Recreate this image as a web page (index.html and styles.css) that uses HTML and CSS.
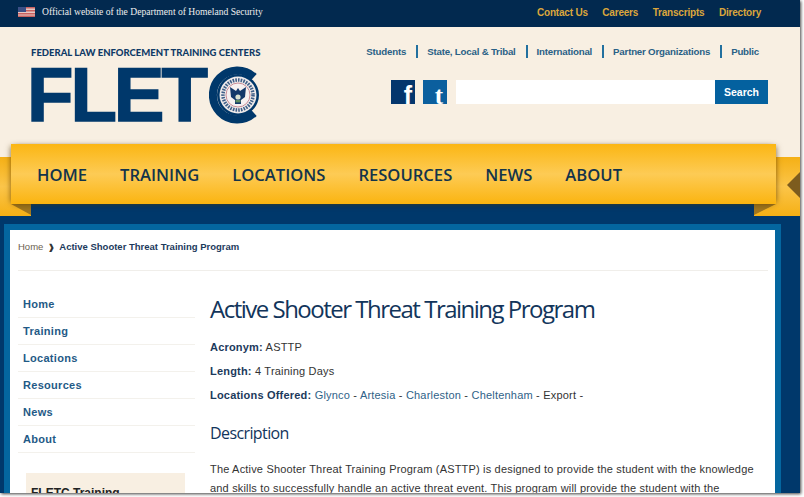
FILE: index.html
```html
<!DOCTYPE html>
<html lang="en">
<head>
  <meta charset="UTF-8">
  <title>Active Shooter Threat Training Program</title>
  <link rel="stylesheet" href="styles.css">
</head>
<body>
  <div class="page">
    <!-- top bar -->
    <div class="topbar">
      <div class="official">
        <svg class="flag" width="17" height="10" viewBox="0 0 17 10">
          <rect width="17" height="10" fill="#e6c8c4"/>
          <rect y="0" width="17" height="1.5" fill="#c9605f"/>
          <rect y="3" width="17" height="1.5" fill="#c9605f"/>
          <rect y="6" width="17" height="1.5" fill="#c9605f"/>
          <rect y="8.5" width="17" height="1.5" fill="#c9605f"/>
          <rect width="8" height="5" fill="#3c4f86"/>
        </svg>
        <span>Official website of the Department of Homeland Security</span>
      </div>
      <div class="toplinks">
        <a>Contact Us</a>
        <a>Careers</a>
        <a>Transcripts</a>
        <a>Directory</a>
      </div>
    </div>

    <!-- logo, audience links, search -->
    <div class="header">
      <div class="logo">
        <div class="logo-small">FEDERAL LAW ENFORCEMENT TRAINING CENTERS</div>
        <div class="logo-big">
          <span class="logo-letters">FLET</span>
          <svg class="logo-c" width="50" height="58" viewBox="0 0 50 58">
            <path d="M45 11 A24.5 24.5 0 1 0 45 47" fill="none" stroke="#00386b" stroke-width="8"/>
            <circle cx="29" cy="29" r="21" fill="#00386b"/>
            <circle cx="29" cy="29" r="18.5" fill="#eeeaea"/>
            <circle cx="29" cy="29" r="15" fill="none" stroke="#3f5f88" stroke-width="3.5" stroke-dasharray="1.6 1.1"/>
            <circle cx="29" cy="29" r="12" fill="#f6f1f1" stroke="#c98d97" stroke-width="1"/>
            <path d="M21 21 L27 25 L29 22 L31 25 L37 21 L36 31 L32 34 L32 38 L26 38 L26 34 L22 31 Z" fill="#12386a"/>
            <circle cx="29" cy="31" r="2.6" fill="#d8e0d0"/>
            <rect x="26.5" y="34" width="5" height="2.4" fill="#5d8b60"/>
          </svg>
        </div>
      </div>
      <div class="header-right">
        <div class="audience">
          <a>Students</a>
          <a>State, Local &amp; Tribal</a>
          <a>International</a>
          <a>Partner Organizations</a>
          <a>Public</a>
        </div>
        <div class="search-row">
          <span class="social social-fb">f</span>
          <span class="social social-tm">t</span>
          <div class="search">
            <div class="search-input"></div>
            <div class="search-btn">Search</div>
          </div>
        </div>
      </div>
    </div>

    <!-- ribbon nav -->
    <div class="banner">
      <span class="fold fold-left"></span>
      <span class="fold fold-right"></span>
      <span class="band-arrow"></span>
      <div class="ribbon">
        <a>HOME</a>
        <a>TRAINING</a>
        <a>LOCATIONS</a>
        <a>RESOURCES</a>
        <a>NEWS</a>
        <a>ABOUT</a>
      </div>
    </div>

    <!-- content -->
    <div class="frame">
      <div class="content">
        <div class="crumbs">
          <a class="crumb-home">Home</a>
          <span class="crumb-sep">&#10097;</span>
          <span class="crumb-current">Active Shooter Threat Training Program</span>
        </div>
        <div class="columns">
          <div class="sidebar">
            <ul class="sidenav">
              <li>Home</li>
              <li>Training</li>
              <li>Locations</li>
              <li>Resources</li>
              <li>News</li>
              <li>About</li>
            </ul>
            <div class="promo">FLETC Training</div>
          </div>
          <div class="article">
            <h1>Active Shooter Threat Training Program</h1>
            <p class="fact"><b>Acronym:</b> ASTTP</p>
            <p class="fact"><b>Length:</b> 4 Training Days</p>
            <p class="fact"><b>Locations Offered:</b> <a>Glynco</a> - <a>Artesia</a> - <a>Charleston</a> - <a>Cheltenham</a> - Export -</p>
            <h2>Description</h2>
            <p class="desc">The Active Shooter Threat Training Program (ASTTP) is designed to provide the student with the knowledge and skills to successfully handle an active threat event. This program will provide the student with the</p>
          </div>
        </div>
      </div>
    </div>
  </div>
</body>
</html>
```

FILE: styles.css
```css
html, body {
  margin: 0;
  height: 100%;
  overflow: hidden;
  background: #fff;
}
body {
  font-family: "Liberation Sans", Arial, sans-serif;
  color: #333;
}
.page {
  width: 800px;
  height: 493px;
  overflow: hidden;
  display: flex;
  flex-direction: column;
  background: #00386b;
  box-shadow: 1px 1px 3px rgba(0, 0, 0, 0.75);
}

/* top bar */
.topbar {
  flex: none;
  height: 27px;
  box-sizing: border-box;
  background: #02294f;
  display: flex;
  justify-content: space-between;
  padding: 0 43px 0 18px;
}
.official {
  display: flex;
  align-items: center;
  gap: 7px;
  height: 23px;
  color: #eee;
  font-family: "Liberation Serif", serif;
  font-size: 9.6px;
}
.toplinks {
  display: flex;
  gap: 14.5px;
  padding-top: 7px;
  font-size: 10px;
  font-weight: bold;
  letter-spacing: -0.2px;
  color: #dba63c;
  margin-right: -4px;
}

/* header */
.header {
  flex: none;
  height: 117px;
  background: #f8efe2;
  display: flex;
  justify-content: space-between;
  padding: 0 32px 0 31px;
}
.logo-small {
  margin-top: 20px;
  font-family: "Lato", sans-serif;
  font-size: 9.5px;
  font-weight: 900;
  color: #0f3a66;
  white-space: nowrap;
}
.logo-big {
  display: flex;
  align-items: center;
  margin-top: 8px;
  height: 58px;
}
.logo-letters {
  margin-left: -4px;
  font-family: "Liberation Sans", sans-serif;
  font-size: 76px;
  line-height: 58px;
  font-weight: bold;
  letter-spacing: -3px;
  color: #00386b;
  -webkit-text-stroke: 1.5px #00386b;
}
.logo-c {
  margin-left: 4px;
}
.header-right {
  display: flex;
  flex-direction: column;
  align-items: flex-end;
}
.audience {
  display: flex;
  margin-top: 18px;
  margin-right: 9px;
  font-size: 9.7px;
  font-weight: bold;
  letter-spacing: -0.2px;
  color: #2a6186;
}
.audience a {
  padding: 0 10px 0 9px;
  line-height: 13px;
  border-right: 2px solid #22709f;
}
.audience a:last-child {
  padding-right: 0;
  border-right: none;
}
.search-row {
  display: flex;
  margin-top: 22px;
}
.social {
  height: 24px;
  overflow: hidden;
  color: #fff;
  text-align: right;
  font-size: 25px;
  font-weight: bold;
  line-height: 31px;
}
.social-fb {
  background: #04366d;
  width: 21px;
  padding-right: 3px;
  margin-right: 8px;
}
.social-tm {
  background: #0b5f9e;
  width: 20px;
  padding-right: 4px;
  margin-right: 9px;
  font-family: "Liberation Serif", serif;
}
.search {
  display: flex;
}
.search-input {
  width: 259px;
  height: 24px;
  background: #fff;
}
.search-btn {
  width: 53px;
  height: 24px;
  background: #04619f;
  color: #fff;
  font-size: 10.5px;
  font-weight: bold;
  line-height: 24px;
  text-align: center;
}

/* ribbon */
.banner {
  flex: none;
  position: relative;
  height: 72px;
  box-sizing: border-box;
  padding: 0 24px 0 11px;
  background: linear-gradient(to bottom, #f8efe2 13px, #00386b 13px);
}
.banner::before,
.banner::after {
  content: "";
  position: absolute;
  top: 13px;
  bottom: 0;
  background: linear-gradient(to bottom, #f5b015, #fbc54a 50%, #f5b015);
}
.banner::before {
  left: 0;
  width: 31px;
}
.banner::after {
  right: 0;
  width: 46px;
}
.fold,
.band-arrow {
  position: absolute;
  z-index: 1;
}
.fold {
  top: 60px;
  width: 20px;
  height: 11px;
  background: #a0761f;
}
.fold-left {
  left: 11px;
  clip-path: polygon(0 0, 100% 0, 100% 100%);
}
.fold-right {
  left: 754px;
  width: 22px;
  clip-path: polygon(0 0, 100% 0, 0 100%);
}
.band-arrow {
  right: 0;
  top: 28px;
  width: 13px;
  height: 26px;
  background: #7d5c1e;
  clip-path: polygon(0 50%, 100% 0, 100% 100%);
}
.ribbon {
  position: relative;
  z-index: 2;
  height: 60px;
  box-sizing: border-box;
  display: flex;
  align-items: center;
  gap: 33px;
  padding: 0 26px;
  background: linear-gradient(to bottom, #fbb613 0, #fdcb55 50%, #fbb410 100%);
  box-shadow: 0 4px 6px -3px rgba(90, 60, 0, 0.35), -3px 0 5px -2px rgba(90, 60, 0, 0.5), 3px 0 5px -2px rgba(90, 60, 0, 0.5);
  font-family: "Open Sans", sans-serif;
  font-size: 16.6px;
  font-weight: 600;
  color: #13344a;
}

/* content */
.frame {
  flex: 1;
  min-height: 0;
  margin: 8px 19px 0 4px;
  padding: 6px 6px 0;
  background: #04669f;
}
.content {
  height: 100%;
  background: #fff;
  padding: 0 7px 0 8px;
  box-sizing: border-box;
  overflow: hidden;
}
.crumbs {
  height: 41px;
  box-sizing: border-box;
  padding-top: 10px;
  border-bottom: 1px solid #f0eeea;
  font-size: 9.5px;
  font-weight: bold;
  line-height: 13px;
}
.crumb-home {
  font-weight: normal;
  color: #6b6250;
}
.crumb-sep {
  margin: 0 2px;
  font-size: 8px;
  color: #333;
}
.crumb-current {
  color: #1c3a5c;
}
.columns {
  display: flex;
}
.sidebar {
  flex: none;
  width: 177px;
  margin-right: 15px;
}
.sidenav {
  list-style: none;
  margin: 20px 0 0;
  padding: 0;
}
.sidenav li {
  height: 27px;
  box-sizing: border-box;
  padding: 7px 0 0 5px;
  line-height: 13px;
  border-bottom: 1px solid #f3f1ec;
  font-size: 11px;
  font-weight: bold;
  letter-spacing: 0.3px;
  color: #1f5a86;
}
.promo {
  margin: 20px 10px 0 8px;
  height: 60px;
  padding: 13px 5px 0;
  background: #f8efe2;
  font-size: 12px;
  font-weight: bold;
  color: #222;
}
.article {
  flex: 1;
  min-width: 0;
}
h1 {
  margin: 21px 0 0;
  font-family: "Open Sans", sans-serif;
  font-size: 24px;
  font-weight: 400;
  line-height: 34px;
  letter-spacing: -1.5px;
  color: #12355b;
  white-space: nowrap;
}
.fact {
  margin: 0;
  font-size: 11px;
  line-height: 24px;
  letter-spacing: 0.2px;
  color: #333;
}
h1 + .fact {
  margin-top: 9px;
}
.fact b {
  color: #1c3a5c;
}
.fact a {
  color: #2f6288;
}
h2 {
  margin: 14px 0 0;
  font-family: "Open Sans", sans-serif;
  font-size: 16px;
  font-weight: 400;
  line-height: 24px;
  letter-spacing: -0.6px;
  color: #12355b;
}
.desc {
  margin: 15px 0 0;
  font-size: 11px;
  line-height: 19px;
  letter-spacing: 0.18px;
  color: #333;
}
```
